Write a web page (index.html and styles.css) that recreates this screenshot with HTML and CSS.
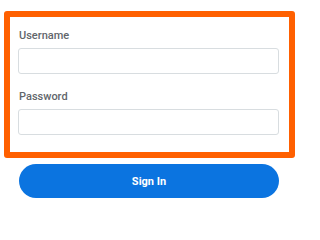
FILE: index.html
```html
<!DOCTYPE html>
<html>
<head>
<meta charset="utf-8">
<link rel="stylesheet" href="styles.css">
</head>
<body>
<div class="page">
  <form class="card">
    <label class="label" for="u">Username</label>
    <input class="field" id="u" type="text">
    <label class="label label-gap" for="p">Password</label>
    <input class="field" id="p" type="password">
  </form>
  <button class="signin" type="button">Sign In</button>
</div>
</body>
</html>
```

FILE: styles.css
```css
html, body {
  margin: 0;
  padding: 0;
  background: #ffffff;
}
body {
  font-family: Roboto, "Liberation Sans", sans-serif;
  width: 300px;
  height: 219px;
  overflow: hidden;
}
.page {
  display: flex;
  flex-direction: column;
  padding: 11px 0 0 4px;
}
.card {
  box-sizing: border-box;
  width: 291px;
  height: 147px;
  margin: 0;
  border: 6px solid #ff6000;
  border-radius: 3px;
  padding: 12px 10px 0 8px;
  display: flex;
  flex-direction: column;
}
.label {
  display: block;
  font-size: 11px;
  line-height: 13px;
  font-weight: 500;
  color: #62666b;
  padding-left: 1px;
  margin-bottom: 6px;
}
.label-gap {
  margin-top: 16px;
}
.field {
  box-sizing: border-box;
  display: block;
  width: 261px;
  height: 26px;
  margin: 0;
  border: 1px solid #d8dde0;
  border-radius: 3px;
  background: #fff;
  outline: none;
  padding: 0 8px;
}
.signin {
  box-sizing: border-box;
  margin: 6px 0 0 15px;
  width: 260px;
  height: 34px;
  border: none;
  border-radius: 17px;
  background: #0b74e0;
  color: #ffffff;
  font-family: Roboto, "Liberation Sans", sans-serif;
  font-size: 11px;
  font-weight: 700;
  padding: 0;
  cursor: pointer;
}
```
